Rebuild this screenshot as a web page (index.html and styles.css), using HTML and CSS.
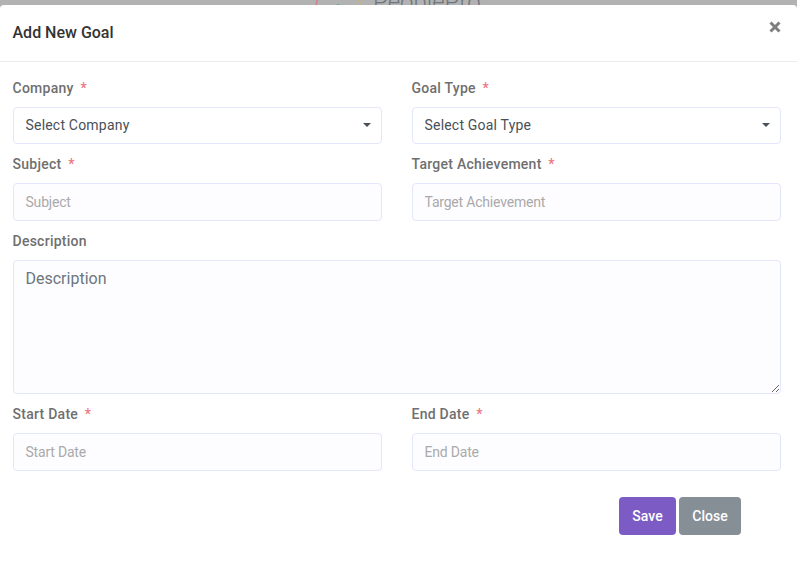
FILE: index.html
```html
<!DOCTYPE html>
<html lang="en">
<head>
<meta charset="utf-8">
<title>Add New Goal</title>
<link rel="stylesheet" href="styles.css">
</head>
<body>
<div class="backdrop">
  <svg class="logo" width="50" height="7" viewBox="0 0 50 7" fill="none" stroke-width="1.500">
    <path d="M3 -3Q1.5 1 1 7" stroke="#cf7f8d"/>
    <path d="M42 -3Q45 1 45.500 7" stroke="#cbb574"/>
    <circle cx="23" cy="6" r="2" fill="#5aa99f"/>
  </svg>
  <span class="brand">PeoplePro</span>
</div>
<main class="modal">
  <header class="modal-header">
    <h1>Add New Goal</h1>
    <button class="dismiss" aria-label="Close dialog"><svg width="12" height="12" viewBox="0 0 12 12"><path d="M1.500 1.500L10.500 10.500M10.500 1.500L1.500 10.500" stroke="#7f7f7f" stroke-width="3"/></svg></button>
  </header>
  <form class="form">
    <div class="field">
      <label>Company <span class="req">*</span></label>
      <div class="control select">Select Company<span class="caret"></span></div>
    </div>
    <div class="field">
      <label>Goal Type <span class="req">*</span></label>
      <div class="control select">Select Goal Type<span class="caret"></span></div>
    </div>
    <div class="field">
      <label>Subject <span class="req">*</span></label>
      <input class="control" placeholder="Subject">
    </div>
    <div class="field">
      <label>Target Achievement <span class="req">*</span></label>
      <input class="control" placeholder="Target Achievement">
    </div>
    <div class="field wide">
      <label>Description</label>
      <textarea class="control area" placeholder="Description"></textarea>
    </div>
    <div class="field">
      <label>Start Date <span class="req">*</span></label>
      <input class="control" placeholder="Start Date">
    </div>
    <div class="field">
      <label>End Date <span class="req">*</span></label>
      <input class="control" placeholder="End Date">
    </div>
  </form>
  <footer class="actions">
    <button class="btn save">Save</button>
    <button class="btn close">Close</button>
  </footer>
</main>
</body>
</html>
```
FILE: styles.css
```css
* { box-sizing: border-box; }
body {
  margin: 0;
  height: 576px;
  overflow: hidden;
  background: #b2b2b2;
  font-family: Roboto, sans-serif;
}
.backdrop {
  height: 5px;
  display: flex;
  padding-left: 315px;
}
.logo { flex: none; }
.brand {
  margin: -10px 0 0 8px;
  color: #6f767d;
  font-size: 24px;
  font-weight: 300;
  line-height: 24px;
}
.modal {
  position: relative;
  height: 571px;
  background: #fff;
  border-radius: 4px 4px 0 0;
}
.modal-header {
  display: flex;
  justify-content: space-between;
  height: 57px;
  padding: 16px 16px 0 12.5px;
  border-bottom: 1px solid #e9ecef;
}
h1 {
  margin: 0;
  color: #333;
  font-size: 16px;
  font-weight: 500;
  line-height: 24px;
}
.dismiss {
  width: 12px;
  height: 12px;
  padding: 0;
  border: 0;
  background: none;
}
.dismiss svg { display: block; }
.form {
  display: grid;
  grid-template-columns: 369px 369px;
  grid-template-rows: 76px 77px 173px 77px;
  column-gap: 30px;
  padding: 16px 0 0 13px;
}
.field { display: flex; flex-direction: column; }
.wide { grid-column: 1 / 3; }
label {
  height: 29px;
  margin-left: -0.5px;
  color: #6f6f6f;
  font-size: 14px;
  font-weight: 500;
  line-height: 21px;
  letter-spacing: 0.26px;
}
.req {
  margin-left: 3px;
  color: #ee7680;
}
.control {
  display: block;
  width: 100%;
  height: 38px;
  padding: 0 11.5px;
  border: 1px solid #e4e6fc;
  border-radius: 4px;
  background: #fdfdff;
  color: #495057;
  font-family: inherit;
  font-size: 14px;
  letter-spacing: -0.2px;
}
.control::placeholder { color: #aaa; opacity: 1; }
.select {
  display: flex;
  align-items: center;
  justify-content: space-between;
  height: 37px;
  padding: 0 10px 2px 11.5px;
  background: #fff;
  letter-spacing: 0.2px;
}
.caret {
  border-top: 4px solid #495057;
  border-right: 4px solid transparent;
  border-left: 4px solid transparent;
}
.area {
  height: 134px;
  padding-top: 6px;
  font-size: 16px;
  line-height: 24px;
  letter-spacing: 0;
}
.area::placeholder { color: #6c757d; }
.actions {
  display: flex;
  justify-content: flex-end;
  gap: 3px;
  padding: 16px 56px 0 0;
}
.btn {
  height: 38px;
  padding: 0;
  border: 0;
  border-radius: 4px;
  color: #fff;
  font-family: inherit;
  font-size: 14px;
  font-weight: 500;
}
.save { width: 57px; background: #7c5cc4; }
.close { width: 62px; background: #868e96; }
```
